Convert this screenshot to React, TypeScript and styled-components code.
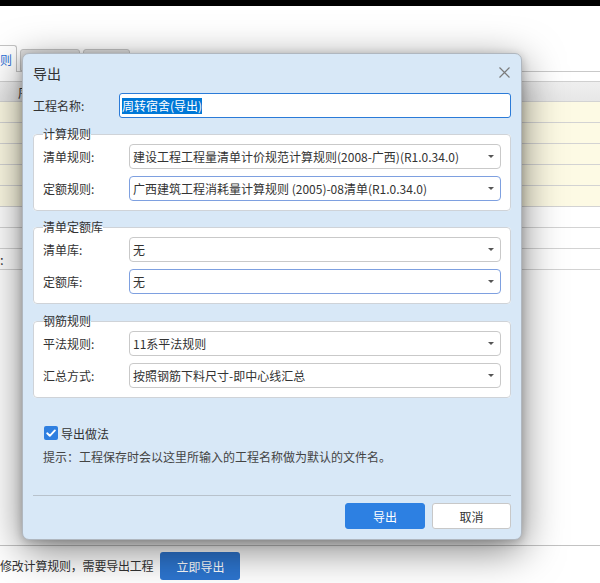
import React from "react";
import styled, { createGlobalStyle } from "styled-components";

const Global = createGlobalStyle`
  html, body { margin: 0; padding: 0; background: #fff; }
  body {
    font-family: "Noto Sans CJK SC", "Microsoft YaHei", sans-serif;
    font-size: 12px;
    color: #333;
  }
  #root { width: 600px; height: 583px; }
`;

const Screen = styled.div`
  position: relative;
  width: 600px;
  height: 583px;
  overflow: hidden;
  display: flex;
  flex-direction: column;
  background: #fff;
`;

const TopBar = styled.div`
  flex: none;
  height: 6px;
  background: #000;
`;

const TabStrip = styled.div`
  flex: none;
  margin-top: 40px;
  height: 25px;
  border-bottom: 1px solid #c9c9c9;
  display: flex;
  align-items: flex-end;
  gap: 3px;
`;

const Tab = styled.div<{ $active?: boolean; $w: number; $shift?: number }>`
  box-sizing: border-box;
  width: ${(p) => p.$w}px;
  height: ${(p) => (p.$active ? 27 : 22)}px;
  margin-left: ${(p) => p.$shift ?? 0}px;
  margin-bottom: ${(p) => (p.$active ? -1 : 0)}px;
  border: 1px solid #c4c4c4;
  border-bottom: ${(p) => (p.$active ? "none" : "1px solid #c4c4c4")};
  border-radius: 3px 3px 0 0;
  background: ${(p) => (p.$active ? "#fff" : "#e2e2e2")};
  color: #2a6fd6;
  font-size: 12px;
  display: flex;
  align-items: center;
  justify-content: flex-end;
  padding-right: 4px;
`;

const Grid = styled.div`
  flex: none;
  margin-top: 9px;
  border-top: 1px solid #d0d0d0;
  border-bottom: 1px solid #d3d3d3;
`;

const HeadRow = styled.div`
  height: 19px;
  background: linear-gradient(#efefef, #e7e7e7);
  display: flex;
  align-items: center;
  padding-left: 18px;
  font-size: 13px;
  color: #333;
`;

const Row = styled.div<{ $yellow?: boolean }>`
  height: 20px;
  border-top: 1px solid #d3d3d3;
  background: ${(p) => (p.$yellow ? "#fdfae4" : "#fff")};
  display: flex;
  align-items: center;
  font-size: 13px;
`;

const Filler = styled.div`
  flex: 1;
`;

const BottomBar = styled.div`
  flex: none;
  height: 31px;
  border-top: 1px solid #c2c2c2;
  display: flex;
  align-items: flex-start;
  gap: 7px;
  padding-top: 6px;
`;

const BarText = styled.span`
  line-height: 28px;
  font-size: 12px;
  color: #333;
  letter-spacing: -0.2px;
`;

const BarButton = styled.div`
  width: 80px;
  height: 28px;
  border-radius: 3px;
  background: #2d75cf;
  color: #fff;
  font-size: 12px;
  display: flex;
  align-items: center;
  justify-content: center;
`;

/* ---------- dialog ---------- */

const Dialog = styled.div`
  position: absolute;
  left: 22px;
  top: 53px;
  width: 500px;
  box-sizing: border-box;
  background: #d8e8f7;
  border: 1px solid #b0b7bf;
  border-radius: 7px;
  box-shadow: 0 10px 40px rgba(0, 0, 0, 0.5), 0 2px 10px rgba(0, 0, 0, 0.22);
  padding: 0 10px 10px;
  display: flex;
  flex-direction: column;
`;

const Header = styled.div`
  height: 39px;
  display: flex;
  align-items: center;
  justify-content: space-between;
`;

const Title = styled.span`
  font-size: 14px;
  color: #333;
  margin-top: -1px;
`;

const CloseBtn = styled.span`
  display: flex;
  margin-right: 1px;
  margin-top: -3px;
`;

const FormRow = styled.div<{ $label: number }>`
  display: grid;
  grid-template-columns: ${(p) => p.$label}px 1fr;
  align-items: center;
  height: 25px;
`;

const Label = styled.span`
  color: #333;
  font-size: 12px;
`;

const NameInput = styled.div`
  height: 25px;
  box-sizing: border-box;
  border: 1px solid #2b7bd8;
  border-radius: 3px;
  background: #fff;
  padding-left: 2px;
  display: flex;
  align-items: center;
`;

const Selected = styled.span`
  background: #0078d7;
  color: #fff;
  line-height: 16px;
  font-size: 12px;
`;

const Group = styled.fieldset<{ $gap: number }>`
  margin: ${(p) => p.$gap}px 0 0;
  padding: 2px 9px 9px;
  border: 1px solid #cfd3d8;
  border-radius: 4px;
  background: #fff;
  min-width: 0;
`;

const Legend = styled.legend`
  padding: 0;
  line-height: 16px;
  font-size: 12px;
  color: #333;
`;

const GroupRows = styled.div`
  display: flex;
  flex-direction: column;
  gap: 7px;
`;

const SelectBox = styled.div<{ $focus?: boolean }>`
  height: 25px;
  box-sizing: border-box;
  border: 1px solid ${(p) => (p.$focus ? "#7ea0e0" : "#c9c9c9")};
  border-radius: 4px;
  background: #fff;
  display: flex;
  align-items: center;
  justify-content: space-between;
  padding: 0 6px 0 3px;
  font-size: 12px;
  color: #333;
  white-space: nowrap;
`;

const Caret = styled.span`
  width: 0;
  height: 0;
  border-left: 3px solid transparent;
  border-right: 3px solid transparent;
  border-top: 3px solid #555;
`;

const CheckRow = styled.div`
  margin-top: 25px;
  height: 20px;
  display: flex;
  align-items: center;
  gap: 3px;
  padding-left: 11px;
`;

const CheckBox = styled.span`
  width: 14px;
  height: 14px;
  border-radius: 2px;
  background: #2f7fe0;
  display: flex;
  align-items: center;
  justify-content: center;
`;

const Hint = styled.div`
  margin-top: 5px;
  line-height: 18px;
  padding-left: 10px;
  font-size: 12px;
  color: #444;
`;

const Separator = styled.div`
  margin-top: 29px;
  height: 0;
  border-top: 1px solid #b8c2cc;
`;

const Footer = styled.div`
  margin-top: 7px;
  display: flex;
  justify-content: flex-end;
  gap: 7px;
`;

const Button = styled.div<{ $primary?: boolean }>`
  width: ${(p) => (p.$primary ? 80 : 79)}px;
  height: 26px;
  box-sizing: border-box;
  border-radius: 3px;
  border: 1px solid ${(p) => (p.$primary ? "#2d80e2" : "#c8c8c8")};
  background: ${(p) => (p.$primary ? "#2d80e2" : "#fff")};
  color: ${(p) => (p.$primary ? "#fff" : "#333")};
  font-size: 12px;
  display: flex;
  align-items: center;
  justify-content: center;
`;

type Field = { label: string; value: string; focus?: boolean };
type GroupData = { title: string; gap: number; fields: Field[] };

const groups: GroupData[] = [
  {
    title: "计算规则",
    gap: 8,
    fields: [
      { label: "清单规则:", value: "建设工程工程量清单计价规范计算规则(2008-广西)(R1.0.34.0)" },
      { label: "定额规则:", value: "广西建筑工程消耗量计算规则 (2005)-08清单(R1.0.34.0)", focus: true },
    ],
  },
  {
    title: "清单定额库",
    gap: 8,
    fields: [
      { label: "清单库:", value: "无" },
      { label: "定额库:", value: "无", focus: true },
    ],
  },
  {
    title: "钢筋规则",
    gap: 9,
    fields: [
      { label: "平法规则:", value: "11系平法规则" },
      { label: "汇总方式:", value: "按照钢筋下料尺寸-即中心线汇总" },
    ],
  },
];

const rows = [
  { yellow: true, text: "" },
  { yellow: true, text: "" },
  { yellow: true, text: "" },
  { yellow: true, text: "" },
  { yellow: true, text: "" },
  { yellow: false, text: "" },
  { yellow: false, text: "" },
  { yellow: false, text: ":" },
];

export default function App() {
  return (
    <>
      <Global />
      <Screen>
        <TopBar />
        <TabStrip>
          <Tab $active $w={47} $shift={-30}>
            则
          </Tab>
          <Tab $w={60} />
          <Tab $w={47} />
        </TabStrip>
        <Grid>
          <HeadRow>序号</HeadRow>
          {rows.map((r, i) => (
            <Row key={i} $yellow={r.yellow}>
              {r.text}
            </Row>
          ))}
        </Grid>
        <Filler />
        <BottomBar>
          <BarText>修改计算规则，需要导出工程</BarText>
          <BarButton>立即导出</BarButton>
        </BottomBar>

        <Dialog>
          <Header>
            <Title>导出</Title>
            <CloseBtn>
              <svg width="11" height="11" viewBox="0 0 11 11">
                <path d="M0.5 0.5 L10.5 10.5 M10.5 0.5 L0.5 10.5" stroke="#7b7b7b" strokeWidth="1.2" fill="none" />
              </svg>
            </CloseBtn>
          </Header>
          <FormRow $label={86}>
            <Label>工程名称:</Label>
            <NameInput>
              <Selected>周转宿舍(导出)</Selected>
            </NameInput>
          </FormRow>

          {groups.map((g) => (
            <Group key={g.title} $gap={g.gap}>
              <Legend>{g.title}</Legend>
              <GroupRows>
                {g.fields.map((f) => (
                  <FormRow key={f.label} $label={86}>
                    <Label>{f.label}</Label>
                    <SelectBox $focus={f.focus}>
                      <span>{f.value}</span>
                      <Caret />
                    </SelectBox>
                  </FormRow>
                ))}
              </GroupRows>
            </Group>
          ))}

          <CheckRow>
            <CheckBox>
              <svg width="14" height="14" viewBox="0 0 14 14">
                <path d="M3.2 7.3 L5.8 9.8 L10.9 4.4" stroke="#fff" strokeWidth="1.9" fill="none" strokeLinecap="round" strokeLinejoin="round" />
              </svg>
            </CheckBox>
            <Label>导出做法</Label>
          </CheckRow>
          <Hint>提示：工程保存时会以这里所输入的工程名称做为默认的文件名。</Hint>
          <Separator />
          <Footer>
            <Button $primary>导出</Button>
            <Button>取消</Button>
          </Footer>
        </Dialog>
      </Screen>
    </>
  );
}
